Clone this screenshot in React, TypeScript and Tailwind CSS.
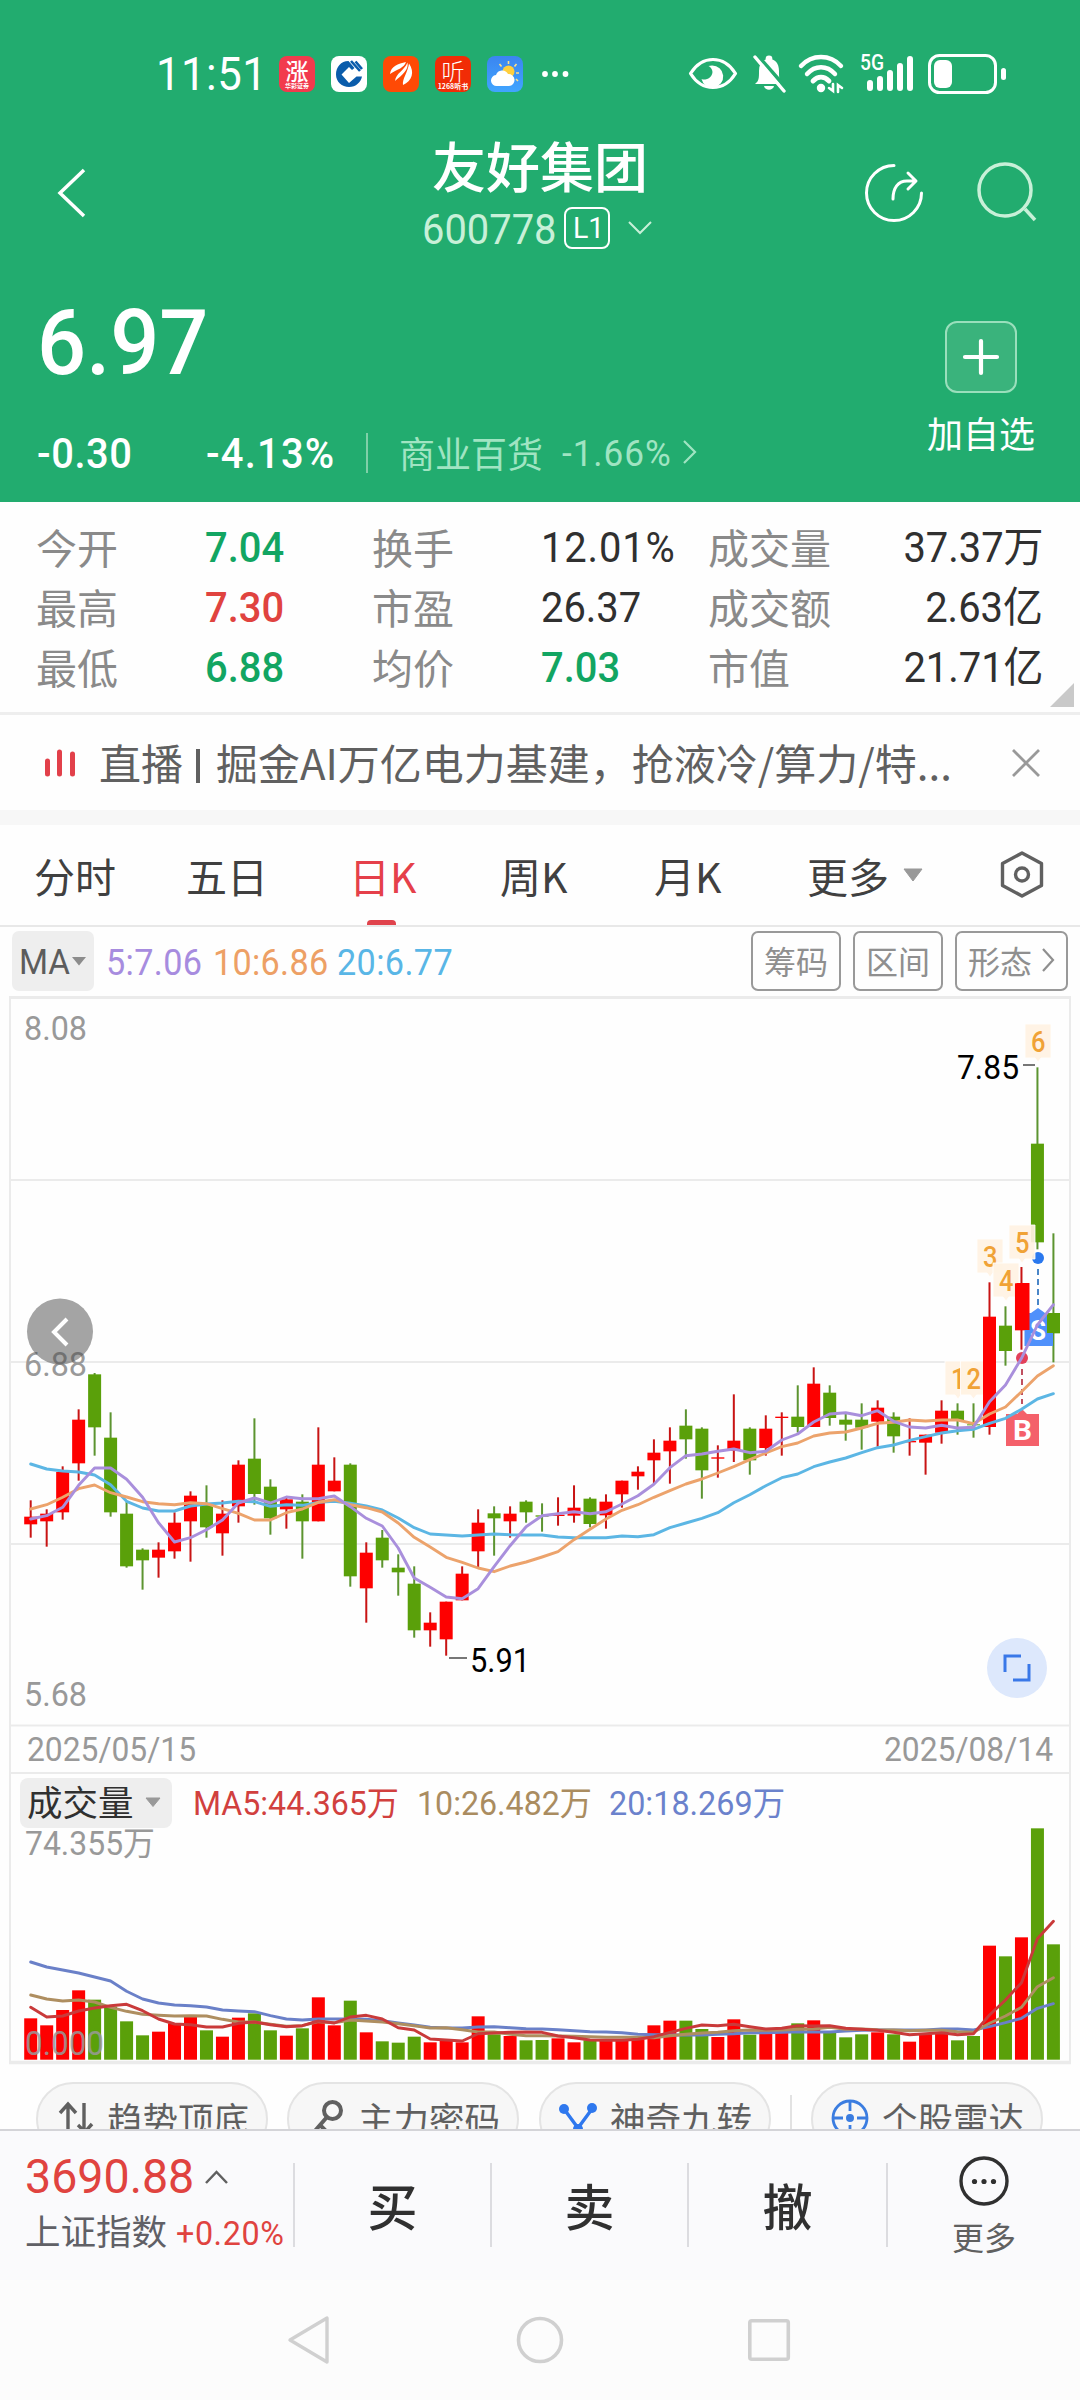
import React from "react";

const CJK = "font-['Noto_Sans_CJK_SC','Noto_Sans',sans-serif]";

/* Slightly condensed numerals, drawn in a box of the width given by the caller. */
function Num({ children, className = "", right = false }: { children: React.ReactNode; className?: string; right?: boolean }) {
  return (
    <span className={"flex shrink-0 whitespace-nowrap leading-none font-['Roboto','Noto_Sans_CJK_SC',sans-serif] " + (right ? "justify-end " : "") + className}>
      <span className={"inline-block scale-x-[0.95] " + (right ? "origin-right" : "origin-left")}>{children}</span>
    </span>
  );
}

function StatusBar() {
  return (
    <div className="flex h-[136px] items-center pt-[12px] pl-[156px]">
      <Num className="w-[123px] text-[46px] tracking-[0.5px] text-white">11:51</Num>
      <div className="flex gap-[16px]">
        <span className={"flex h-9 w-9 flex-col items-center rounded-[8px] bg-[#f23a4d] text-white " + CJK}>
          <span className="mt-[2px] text-[23px] leading-[24px] font-medium">涨</span>
          <span className="text-[6px] leading-[7px] font-bold whitespace-nowrap">华彩证券</span>
        </span>
        <span className="flex h-9 w-9 items-center justify-center rounded-[8px] bg-white">
          <svg width="36" height="36" viewBox="0 0 36 36">
            <path d="M17.500 5C10 5 5 11 5 18.500S11 31 18 31S30 26 31 20.500H25.500L18 27L10.500 18.500L18 11L21 14L23.500 12L17.500 5Z" fill="#0a5cab" />
            <path d="M20 5L29 15M24.500 5.500L31 13" stroke="#0a5cab" strokeWidth="2.600" fill="none" />
          </svg>
        </span>
        <span className="flex h-9 w-9 items-center justify-center rounded-[8px] bg-[#ff4a05]">
          <svg width="36" height="36" viewBox="0 0 36 36" fill="#fff">
            <path d="M7 18C8 10 15 8 23 6C21 12 15 13 7 18Z" />
            <path d="M12 25C13 17 21 15 24.500 6.500C26 14 19 19 12 25Z" />
            <path d="M20 29C19 23 25 16 26 7.500C32 16 29 25 20 29Z" />
          </svg>
        </span>
        <span className={"flex h-9 w-9 flex-col items-center rounded-[8px] bg-[#f12c06] text-white " + CJK}>
          <span className="mt-[2px] text-[23px] leading-[24px] font-light">听</span>
          <span className="text-[7px] leading-[8px] font-bold whitespace-nowrap">1268听书</span>
        </span>
        <span className="flex h-9 w-9 rounded-[8px] bg-gradient-to-b from-[#3b85f0] to-[#41a5ff]">
          <svg width="36" height="36" viewBox="0 0 36 36">
            <circle cx="21.500" cy="15.500" r="6" fill="#ffcf3f" />
            <path d="M21.500 5v3M12.500 8l2 2.500M29.500 8l-2 2.500M29 17h3M29 23l2 2" stroke="#ffe08a" strokeWidth="1.600" />
            <path d="M10 30a5.500 5.500 0 0 1-1-11a6.500 6.500 0 0 1 12-1a6 6 0 0 1 1 12z" fill="#fff" />
          </svg>
        </span>
      </div>
      <svg className="ml-[18px]" width="28" height="8" fill="#fff">
        <circle cx="4" cy="4" r="2.900" />
        <circle cx="14" cy="4" r="2.900" />
        <circle cx="24.500" cy="4" r="2.900" />
      </svg>
      <svg className="ml-[119px]" width="50" height="36" viewBox="0 0 50 36" fill="none">
        <path d="M2.500 17.500C9 7 16 3.500 25 3.500s16 3.500 22.500 14C41 28 34 31.500 25 31.500S9 28 2.500 17.500Z" stroke="#fff" strokeWidth="3.200" strokeLinejoin="round" />
        <path d="M24 9.500a11 11 0 1 1-10.500 13.500a8 8 0 0 0 11-7a8 8 0 0 0-4-6z" fill="#fff" />
      </svg>
      <svg className="ml-[13px]" width="36" height="40" viewBox="0 0 36 40">
        <path d="M4 30c4-3 4-6 4-13c0-8 4-12 10-12s10 4 10 12c0 7 0 10 4 13z" fill="#fff" />
        <path d="M13 32h10c-1 5-9 5-10 0z" fill="#fff" />
        <circle cx="18" cy="5" r="3.400" fill="#fff" />
        <path d="M6 1L35 34" stroke="#22ac6f" strokeWidth="4" />
        <path d="M4 3L33 37" stroke="#fff" strokeWidth="3.400" strokeLinecap="round" />
      </svg>
      <svg className="ml-[10px]" width="50" height="40" viewBox="0 0 50 40" fill="none" stroke="#fff" strokeWidth="4.400" strokeLinecap="round">
        <path d="M4 12C15 0 33 0 44 12" />
        <path d="M10 20C18 11 30 11 38 20" />
        <path d="M16 27C21 22 27 22 32 27" strokeWidth="4.800" />
        <circle cx="24" cy="34" r="3.200" fill="#fff" strokeWidth="2" />
        <path d="M36 30v7l-4-3M41 38v-7l4 3" strokeWidth="2.600" />
      </svg>
      <svg className="ml-[13px] -mr-1 overflow-visible" width="56" height="40" viewBox="0 0 56 40">
        <text x="0" y="16" textLength="24" lengthAdjust="spacingAndGlyphs" fill="#fff" fontSize="22" fontWeight="500" fontFamily="Roboto">5G</text>
        <g stroke="#fff" strokeWidth="6" strokeLinecap="round">
          <path d="M10 29v5M20 25v9M30 19v15M40 12v22M50 5v29" />
        </g>
      </svg>
      <svg className="ml-[13px]" width="82" height="42" viewBox="0 0 82 42">
        <rect x="4.500" y="2.500" width="66" height="37" rx="10" fill="none" stroke="#fff" strokeWidth="3" />
        <rect x="9" y="7" width="18" height="28" rx="6" fill="#fff" />
        <rect x="76" y="15" width="5" height="12" rx="2.500" fill="#fff" />
      </svg>
    </div>
  );
}

function Header() {
  return (
    <header className="flex h-[502px] flex-col bg-[#22ac6f] text-white">
      <StatusBar />
      <div className="flex h-[124px] items-start">
        <div className="flex h-[114px] w-[360px] items-center pl-[57px]">
          <svg width="30" height="50" viewBox="0 0 30 50" fill="none" stroke="#fff" strokeWidth="3.500">
            <path d="M27 2L3 25L27 48" />
          </svg>
        </div>
        <div className="flex w-[360px] flex-col items-center">
          <div className={"flex h-[60px] items-center pb-[3px] text-[54px] leading-none font-medium " + CJK}>友好集团</div>
          <div className="flex h-[64px] w-[240px] items-center pl-[2px] text-[#c8f0d8]">
            <Num className="w-[142px] pt-[4px] text-[42px]">600778</Num>
            <span className="flex h-[42px] w-[46px] items-center justify-center rounded-[8px] border-2 border-white pl-[3px] text-white">
              <Num className="w-[32px] text-[30px]">L1</Num>
            </span>
            <svg className="ml-[17px]" width="26" height="16" viewBox="0 0 26 16" fill="none" stroke="#c8f0d8" strokeWidth="2">
              <path d="M2 2L13 13L24 2" />
            </svg>
          </div>
        </div>
        <div className="flex h-[114px] items-center pl-[143px]">
          <svg width="62" height="62" viewBox="0 0 62 62" fill="none" stroke="#fff" strokeWidth="3" strokeLinecap="round">
            <path d="M31 3.500A27.500 27.500 0 1 0 58.500 31" />
            <path d="M30 37C30 26 35 19 44 19H52M45 11L53 19L45 27" strokeLinejoin="round" />
          </svg>
          <svg className="ml-[49px]" width="64" height="62" viewBox="0 0 64 62" fill="none" stroke="#c8f0d8" strokeWidth="3.500">
            <circle cx="31" cy="28" r="26" />
            <path d="M51 47L61 58" />
          </svg>
        </div>
      </div>
      <div className="flex flex-1 justify-between pr-[30px] pl-[37px]">
        <div className="pt-[31px]">
          <Num className="h-[104px] items-center text-[91px] font-medium">6.97</Num>
          <div className="mt-[29px] flex h-[60px] items-center">
            <Num className="w-[169px] text-[42px] font-medium tracking-[0.6px]">-0.30</Num>
            <Num className="w-[160px] text-[42px] font-medium tracking-[1.3px]">-4.13%</Num>
            <span className="-mt-[3px] h-[40px] w-[2px] bg-[#7fd0a8]" />
            <span className={"ml-[31px] w-[163px] pb-[5px] text-[36px] leading-none whitespace-nowrap text-[#a0e4c2] " + CJK}>商业百货</span>
            <Num className="w-[119px] pb-[2px] text-[37px] tracking-[1px] text-[#a0e4c2]">-1.66%</Num>
            <svg className="-mt-[4px]" width="16" height="26" viewBox="0 0 16 26" fill="none" stroke="#a0e4c2" strokeWidth="2.200">
              <path d="M3 2L14 13L3 24" />
            </svg>
          </div>
        </div>
        <div className="flex w-[138px] flex-col items-center pt-[61px]">
          <div className="flex h-[72px] w-[72px] items-center justify-center rounded-[12px] border-2 border-[#9adfbc] bg-[#3ab37c]">
            <svg width="38" height="38" viewBox="0 0 38 38" stroke="#fff" strokeWidth="4.200" strokeLinecap="round">
              <path d="M3 19H35M19 3V35" />
            </svg>
          </div>
          <div className={"mt-[19px] text-[36px] leading-[40px] " + CJK}>加自选</div>
        </div>
      </div>
    </header>
  );
}

const STATS = [
  ["今开", "7.04", "换手", "12.01%", "成交量", "37.37万"],
  ["最高", "7.30", "市盈", "26.37", "成交额", "2.63亿"],
  ["最低", "6.88", "均价", "7.03", "市值", "21.71亿"],
];
const toneOf = (v: string) =>
  v === "7.30" ? "text-[#e0433f]" : ["7.04", "6.88", "7.03"].includes(v) ? "text-[#12a562]" : "text-[#303030]";

function Stats() {
  return (
    <section className="relative h-[213px] border-b-[3px] border-[#eeeeee] pt-[16px] pl-[36px]">
      {STATS.map((r) => (
        <div key={r[0]} className={"flex h-[60px] items-center text-[41px] leading-none text-[#8a8a8a] " + CJK}>
          <span className="w-[169px] pb-[3px]">{r[0]}</span>
          <Num className={"w-[167px] text-[42px] font-medium " + toneOf(r[1])}>{r[1]}</Num>
          <span className="w-[169px] pb-[3px]">{r[2]}</span>
          <Num className={"w-[167px] text-[42px] " + (r[3] === "7.03" ? "font-medium " : r[3] === "12.01%" ? "tracking-[0.9px] " : "") + toneOf(r[3])}>{r[3]}</Num>
          <span className="w-[140px] pb-[3px]">{r[4]}</span>
          <Num right className={"w-[195px] text-[42px] " + toneOf(r[5])}>{r[5]}</Num>
        </div>
      ))}
      <svg className="absolute right-[6px] bottom-[5px]" width="24" height="24">
        <path d="M24 0V24H0Z" fill="#c9c9c9" />
      </svg>
    </section>
  );
}

function LiveBanner() {
  return (
    <section className="box-border flex h-[110px] items-center border-b-[15px] border-[#f7f7f7] pl-[44px]">
      <svg width="32" height="28" viewBox="0 0 32 28" stroke="#e2404a" strokeWidth="5" strokeLinecap="round">
        <path d="M3.500 12V25M15.500 3V25M28.500 5V25" />
      </svg>
      <span className={"ml-[23px] w-[901px] pb-[2px] text-[42px] leading-none whitespace-nowrap text-[#606060] " + CJK}>
        直播<span className="mr-[16px] ml-[13px] inline-block h-[34px] w-[4px] bg-[#606060] align-[-3px]" />掘金AI万亿电力基建，抢液冷/算力/特...
      </span>
      <svg className="ml-[11px]" width="30" height="28" viewBox="0 0 30 28" stroke="#999" strokeWidth="2.800">
        <path d="M2 1L28 27M28 1L2 27" />
      </svg>
    </section>
  );
}

function Tabs() {
  const base = "flex h-full items-center ";
  return (
    <nav className={"relative flex h-[102px] items-center border-b-2 border-[#e8e8e8] pl-[34px] text-[41px] leading-none text-[#404040] " + CJK}>
      <span className={base + "w-[152px]"}>分时</span>
      <span className={base + "w-[163px]"}>五日</span>
      <span className={base + "relative w-[151px] text-[#e5404a]"}>
        日K
        <i className="absolute bottom-0 left-[18px] h-[5px] w-[29px] rounded-t bg-[#e0434c]" />
      </span>
      <span className={base + "w-[154px]"}>周K</span>
      <span className={base + "w-[153px]"}>月K</span>
      <span className={base + "w-[95px]"}>更多</span>
      <svg width="22" height="14"><path d="M2 1H20L11 13Z" fill="#999" stroke="#999" strokeLinejoin="round" /></svg>
      <svg className="ml-[75px]" width="46" height="50" viewBox="0 0 46 50" fill="none" stroke="#606060" strokeWidth="3.400" strokeLinejoin="round">
        <path d="M23 3L42.500 13.500V35.500L23 46L3.500 35.500V13.500Z" />
        <circle cx="23" cy="24.500" r="6.500" />
      </svg>
    </nav>
  );
}

function MaRow() {
  const btn = "flex h-[60px] items-center justify-center rounded-[7px] border-2 border-[#999] pb-[2px] text-[32px] leading-none text-[#8f8f8f] ";
  return (
    <div className={"flex h-[69px] items-start pt-[4px] pl-[12px] " + CJK}>
      <span className="flex h-[60px] w-[82px] items-center rounded-[7px] bg-[#eeeeee] pl-[7px]">
        <Num className="w-[52px] pt-[2px] text-[35px] text-[#5c5c5c]">MA</Num>
        <svg width="16" height="10"><path d="M1 1H15L8 9.500Z" fill="#8c8c8c" /></svg>
      </span>
      <span className="flex h-[64px] items-center">
        <Num className="ml-[12px] w-[107px] text-[36px] tracking-[0.4px] text-[#a78cdf]">5:7.06</Num>
        <Num className="w-[124px] text-[36px] tracking-[0.3px] text-[#eda065]">10:6.86</Num>
        <Num className="w-[120px] text-[36px] tracking-[0.4px] text-[#59b6e6]">20:6.77</Num>
      </span>
      <span className={btn + "ml-[294px] w-[90px]"}>筹码</span>
      <span className={btn + "ml-[12px] w-[90px]"}>区间</span>
      <span className={btn + "ml-[12px] w-[113px]"}>
        形态
        <svg className="ml-[9px]" width="14" height="26" viewBox="0 0 14 26" fill="none" stroke="#8f8f8f" strokeWidth="2.200"><path d="M2 2L12 13L2 24" /></svg>
      </span>
    </div>
  );
}

/* [up, bodyTop, bodyBottom, high, low] in thirds of a pixel from y=1340 */
const CANDLES: number[][] = [
  [1,530,553,481,593],[1,521,544,508,620],[1,396,517,379,539],[1,239,370,208,422],[0,103,262,99,347],[0,293,517,217,530],[0,521,679,485,683],[0,629,661,625,749],
  [1,629,653,607,713],[1,548,634,517,656],[1,467,544,454,665],[0,490,562,436,593],[1,521,580,481,647],[1,374,499,361,548],[0,356,462,235,494],[0,440,535,418,584],
  [1,478,508,472,566],[0,485,544,463,656],[1,374,544,262,544],[1,422,454,352,454],[0,374,709,370,740],[1,638,745,607,848],[0,593,661,570,683],[0,683,697,643,767],
  [0,731,871,679,893],[1,848,871,817,920],[1,785,898,785,947],[1,701,781,679,781],[1,548,634,508,683],[0,520,535,499,647],[1,521,544,499,593],[0,485,517,481,548],
  [0,526,530,490,575],[1,524,528,472,557],[1,503,527,436,548],[0,476,552,472,562],[1,485,526,463,566],[1,422,463,422,503],[1,395,409,379,449],[1,338,361,298,431],
  [1,302,334,262,431],[0,257,298,208,356],[0,266,391,262,476],[1,352,356,316,413],[1,302,332,163,366],[0,266,361,262,404],[1,266,324,226,347],[1,230,234,217,347],
  [0,230,261,136,278],[1,131,261,82,261],[0,158,234,136,257],[0,239,254,221,302],[0,239,263,190,329],[1,203,245,181,320],[0,230,289,217,338],[1,303,307,235,347],
  [1,284,308,284,404],[1,212,278,181,311],[0,212,240,190,284],[0,253,256,190,293],[1,-70,261,-173,284],[0,-43,33,-101,77],[1,-170,-29,-219,29],[0,-589,-293,-818,-272],[0,-80,-20,-320,67],
];
const MA5 = [537,527,502,436,384,384,418,472,548,606,593,569,540,489,474,489,471,476,476,468,500,535,558,624,714,742,771,776,746,680,617,560,527,521,515,521,515,492,467,433,383,347,342,334,327,338,334,300,282,246,222,218,227,212,244,261,264,256,264,262,185,135,55,-45,-106];
const MA10 = [507,494,472,446,435,458,471,485,491,494,488,491,506,520,540,540,518,507,487,479,494,503,516,549,592,621,652,667,684,695,678,666,651,635,599,568,537,511,494,472,452,432,417,399,380,359,339,320,309,288,279,276,264,250,247,240,243,240,240,251,222,201,155,108,77];
const MA20 = [372,387,393,396,405,434,484,504,513,513,498,492,489,484,485,499,494,496,487,484,490,498,510,534,563,582,585,588,585,582,584,585,585,591,593,593,593,588,590,584,563,549,535,518,488,464,437,413,402,380,366,354,338,323,315,301,290,279,272,268,250,235,208,177,161];

const VOL = [955,976,930,871,899,920,964,1006,995,970,945,991,1010,953,940,991,1007,985,892,976,902,997,1024,1028,1010,1027,1022,1027,949,1003,1008,1021,1020,1015,1027,1021,1018,1018,1018,976,962,962,987,1011,958,1004,993,997,970,961,999,1012,1003,997,1003,1025,1003,1000,1021,1008,737,769,712,385,733];
const V5 = [922,951,948,933,924,917,913,932,957,972,974,981,981,970,966,974,980,977,963,969,951,946,957,983,990,1017,1020,1023,1001,999,997,996,997,1008,1013,1020,1021,1021,1018,1010,997,985,975,977,973,980,987,985,977,978,977,985,988,991,997,1004,1001,998,1004,1001,945,900,848,716,664];
const V10 = [885,897,903,900,906,922,934,943,946,948,947,948,958,966,966,973,979,977,965,968,960,963,966,971,977,984,983,989,996,996,1003,1007,1007,1008,1009,1010,1012,1012,1012,1013,1007,1003,999,997,992,990,991,990,988,987,982,988,987,989,990,992,991,991,995,997,970,948,922,860,833];
const V20 = [786,801,810,819,831,843,874,897,909,915,917,921,930,933,935,947,957,960,957,957,957,958,962,969,975,982,984,984,981,980,983,986,987,989,992,995,996,998,1003,1004,1005,1005,1005,1003,1001,998,998,997,995,996,996,993,991,990,990,990,990,987,987,990,980,968,955,925,911];

const X = (i: number) => 30.7 + i * 15.98;
const line = (a: number[], base: number) => a.map((v, i) => `${X(i).toFixed(1)},${(base + v / 3).toFixed(1)}`).join(" ");
const RED = "#fe0000";
const GREEN = "#5aa00a";

function Label({ x, y, w, s = 33.5, fill = "#999", children, weight = 400 }: { x: number; y: number; w: number; s?: number; fill?: string; weight?: number; children: string }) {
  return (
    <text x={x} y={y} textLength={w} lengthAdjust="spacingAndGlyphs" fontSize={s} fontWeight={weight} fill={fill} fontFamily="Roboto, 'Noto Sans CJK SC', sans-serif">
      {children}
    </text>
  );
}

function Badge({ x, y, n }: { x: number; y: number; n: string }) {
  return (
    <g>
      <path d={`M${x - 13} ${y}h26v34h-10l-3 4l-3-4h-10z`} fill="#fff2e3" fillOpacity="0.93" stroke="#fff" strokeWidth="0.8" />
      <Label x={x - 7} y={y + 28} w={14.5} s={30} fill="#f0a236" weight={500}>{n}</Label>
    </g>
  );
}

function Charts() {
  return (
    <svg className="block" width="1080" height="1070" viewBox="0 996 1080 1070">
      <g stroke="#ebebeb" strokeWidth="2" fill="none">
        <path d="M10 2061V997H1070V2061" />
        <path d="M10 1180H1070M10 1362H1070M10 1544H1070M10 1725.500H1070M10 1773H1070" />
        <path d="M9 997.500H1071" strokeWidth="3" />
        <path d="M9 2062.500H1071" strokeWidth="3.500" />
      </g>
      <Label x={24} y={1040} w={63}>8.08</Label>
      <Label x={24} y={1376} w={63}>6.88</Label>
      <Label x={24} y={1706} w={63}>5.68</Label>

      <Badge x={958} y={1361} n="1" />
      <Badge x={973.500} y={1361} n="2" />
      <Badge x={990} y={1239} n="3" />
      <Badge x={1006} y={1263} n="4" />
      <Badge x={1038} y={1024} n="6" />

      {CANDLES.map(([up, t, b, h, l], i) => {
        const c = up ? RED : GREEN;
        return (
          <g key={i}>
            <rect x={X(i) - 1} y={1340 + h / 3} width="2" height={(l - h) / 3} fill={up ? "#c81414" : "#5c9430"} />
            <rect x={X(i) - 6.500} y={1340 + t / 3} width="13" height={(b - t) / 3} fill={c} />
          </g>
        );
      })}
      <circle cx="1038" cy="1258" r="6" fill="#2a78ee" />
      <Badge x={1022} y={1225} n="5" />
      <path d="M1038 1269V1306" stroke="#4a86c8" strokeWidth="2" strokeDasharray="6 4" />
      <path d="M1022 1369V1404" stroke="#c05060" strokeWidth="2" strokeDasharray="6 4" />
      <path d="M1038 1308L1045 1313H1053V1346H1024.500V1313H1031Z" fill="#4f90fb" />
      <rect x="1016.500" y="1283" width="13" height="47" fill={RED} />
      <rect x="1047" y="1313" width="13" height="20" fill={GREEN} />
      <Label x={1030} y={1340} w={16} s={28} fill="#fff" weight={700}>S</Label>
      <path d="M1022 1409L1027 1414H1039V1446H1006V1414H1017Z" fill="#f4606a" />
      <Label x={1013} y={1440} w={19} s={28} fill="#fff" weight={700}>B</Label>
      <circle cx="1022" cy="1358" r="6" fill="#e2405a" />

      <g fill="none" strokeWidth="2.900" strokeLinejoin="round" strokeLinecap="round">
        <polyline points={line(MA20, 1340)} stroke="#5cb6e4" />
        <polyline points={line(MA10, 1340)} stroke="#eca36c" />
        <polyline points={line(MA5, 1340)} stroke="#a98fdc" />
      </g>

      <path d="M1023 1065H1035M449 1658H467" stroke="#777" strokeWidth="2" />
      <Label x={957} y={1079} w={62} s={33} fill="#000">7.85</Label>
      <Label x={470} y={1672} w={60} s={33} fill="#000">5.91</Label>

      <circle cx="60" cy="1331.500" r="33" fill="#4a4a4a" fillOpacity="0.5" />
      <path d="M67 1319L54 1332L67 1345" fill="none" stroke="#fff" strokeWidth="4" />
      <circle cx="1017" cy="1668" r="30" fill="#dde8fc" />
      <path d="M1005 1672V1656H1021M1029 1664V1680H1013" fill="none" stroke="#3a78e8" strokeWidth="3" />

      <Label x={27} y={1761} w={169}>2025/05/15</Label>
      <Label x={884} y={1761} w={169}>2025/08/14</Label>

      <rect x="20" y="1778" width="152" height="50" rx="8" fill="#eeeeee" />
      <text x="27" y="1816" fontSize="35.500" fill="#303030" fontFamily="'Noto Sans CJK SC'">成交量</text>
      <path d="M146 1798H160L153 1806.500Z" fill="#999" stroke="#999" strokeLinejoin="round" />
      <Label x={193} y={1815} w={206} fill="#d1403e" s={33}>MA5:44.365万</Label>
      <Label x={417} y={1815} w={175} fill="#aa8c60" s={33}>10:26.482万</Label>
      <Label x={609} y={1815} w={176} fill="#6b82cc" s={33}>20:18.269万</Label>
      <Label x={25} y={1855} w={130}>74.355万</Label>

      {VOL.map((v, i) => (
        <rect key={i} x={X(i) - 6.500} y={1700 + v / 3} width="13" height={2059.700 - 1700 - v / 3} fill={CANDLES[i][0] ? RED : GREEN} />
      ))}
      <g fill="none" strokeWidth="2.900" strokeLinejoin="round" strokeLinecap="round">
        <polyline points={line(V20, 1700)} stroke="#6a80c8" />
        <polyline points={line(V10, 1700)} stroke="#ae8e60" />
        <polyline points={line(V5, 1700)} stroke="#c93a3a" />
      </g>
      <g opacity="0.85">
        <Label x={25} y={2055} w={79}>0.000</Label>
      </g>
    </svg>
  );
}

function Pill({ icon, children, className }: { icon: React.ReactNode; children: string; className: string }) {
  return (
    <span className={"flex h-[74px] w-[232px] shrink-0 items-center rounded-[37px] border-2 border-[#e4e4e4] bg-[#f7f7f7] pb-[2px] pl-[18px] text-[35.500px] leading-none text-[#606060] " + CJK + " " + className}>
      <span className="w-[51px]">{icon}</span>
      {children}
    </span>
  );
}

function Shortcuts() {
  return (
    <div className="flex h-[63px] items-start overflow-hidden pt-[16px] pl-[36px]">
      <Pill className="" icon={
        <svg width="40" height="40" viewBox="0 0 40 40" fill="none" stroke="#606060" strokeWidth="3.400"><path d="M12 36V7M4 15L12 6L20 15M28 5V34M28 35L36 26M30 35L22 27" /></svg>
      }>趋势顶底</Pill>
      <Pill className="ml-[19px]" icon={
        <svg width="40" height="40" viewBox="0 0 40 40" fill="none" stroke="#606060" strokeWidth="4"><circle cx="25.500" cy="12.500" r="8.500" /><path d="M20 19L7 34M13 27L21 35" /></svg>
      }>主力密码</Pill>
      <Pill className="ml-[20px]" icon={
        <svg width="40" height="40" viewBox="0 0 40 40" fill="none" stroke="#2f78ee" strokeWidth="3.400"><path d="M5 11L19 30L33 11" /><g fill="#2f78ee" stroke="none"><circle cx="5" cy="11" r="5" /><circle cx="33" cy="10" r="5" /><circle cx="19" cy="31" r="5" /></g></svg>
      }>神奇九转</Pill>
      <span className="mt-[13px] ml-[19px] h-[50px] w-[2px] shrink-0 bg-[#e2e2e2]" />
      <Pill className="ml-[19px]" icon={
        <svg width="40" height="40" viewBox="0 0 40 40" fill="none" stroke="#3b7de0" strokeWidth="2.800"><circle cx="19" cy="20" r="17" /><path d="M19 3V13M19 27V37M2 20H12M26 20H36" /><circle cx="19" cy="20" r="2.600" fill="#3b7de0" /></svg>
      }>个股雷达</Pill>
    </div>
  );
}

function BottomBar() {
  const act = "flex h-full items-center justify-center pb-[3px] text-[50px] leading-none font-medium text-[#303030] ";
  const sep = "-mt-[2px] h-[84px] w-[2px] shrink-0 bg-[#dcdce0]";
  return (
    <footer className={"flex h-[151px] items-center border-t-2 border-[#d4d4d8] bg-[#fafafc] " + CJK}>
      <div className="h-full w-[293px] pl-[25px]">
        <div className="flex h-[50px] items-center pt-[40px]">
          <Num className="w-[179px] text-[49px] text-[#e0433f]">3690.88</Num>
          <svg className="mt-[2px]" width="25" height="15" viewBox="0 0 25 15" fill="none" stroke="#606060" strokeWidth="2.500"><path d="M2 13L12.500 2L23 13" /></svg>
        </div>
        <div className="flex h-[50px] items-center pt-[48px]">
          <span className="w-[151px] text-[35.500px] leading-none whitespace-nowrap text-[#606066]">上证指数</span>
          <Num className="mt-[5px] w-[108px] text-[34px] tracking-[0.6px] text-[#e0433f]">+0.20%</Num>
        </div>
      </div>
      <i className={sep} />
      <span className={act + "w-[195px]"}>买</span>
      <i className={sep} />
      <span className={act + "w-[195px]"}>卖</span>
      <i className={sep} />
      <span className={act + "w-[197px]"}>撤</span>
      <i className={sep} />
      <div className="flex h-full flex-1 flex-col items-center pt-[23px]">
        <svg width="54" height="54" viewBox="0 0 54 54">
          <circle cx="27" cy="27" r="23" fill="none" stroke="#303030" strokeWidth="3.400" />
          <g fill="#303030"><circle cx="17.500" cy="27.500" r="2.600" /><circle cx="27" cy="27.500" r="2.600" /><circle cx="36.500" cy="27.500" r="2.600" /></g>
        </svg>
        <span className="mt-[12px] text-[32px] leading-none text-[#606060]">更多</span>
      </div>
    </footer>
  );
}

function NavBar() {
  return (
    <div className="flex h-[120px] items-center bg-[#fcfcfc] pl-[286px]">
      <svg width="46" height="50" viewBox="0 0 46 50" fill="none" stroke="#d0d0d0" strokeWidth="3.400" strokeLinejoin="round"><path d="M41 3V47L4 25Z" /></svg>
      <svg className="ml-[183px]" width="50" height="50" viewBox="0 0 50 50" fill="none" stroke="#d0d0d0" strokeWidth="3.600"><circle cx="25" cy="25" r="21.500" /></svg>
      <svg className="ml-[181px]" width="46" height="46" viewBox="0 0 46 46" fill="none" stroke="#d0d0d0" strokeWidth="3.600"><rect x="3.800" y="3.800" width="38.500" height="38.500" rx="2" /></svg>
    </div>
  );
}

export default function App() {
  return (
    <main className="flex h-[2400px] w-[1080px] flex-col overflow-hidden bg-[#fefefe]">
      <Header />
      <Stats />
      <LiveBanner />
      <Tabs />
      <MaRow />
      <Charts />
      <Shortcuts />
      <BottomBar />
      <NavBar />
    </main>
  );
}
